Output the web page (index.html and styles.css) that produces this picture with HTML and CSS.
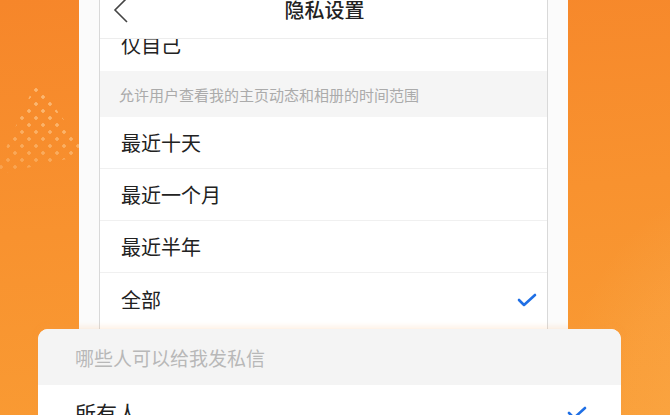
FILE: index.html
```html
<!DOCTYPE html>
<html lang="zh">
<head>
<meta charset="utf-8">
<title>隐私设置</title>
<link rel="stylesheet" href="styles.css">
</head>
<body>
<div class="stage">
  <div class="dots"></div>
  <div class="glow"></div>
  <div class="phone">
    <div class="screen">
      <header class="nav">
        <svg class="back" width="18" height="24" viewBox="0 0 18 24"><polyline points="15,-2 3,10 15,22" fill="none" stroke="#444" stroke-width="1.6"/></svg>
        <h1 class="title">隐私设置</h1>
      </header>
      <ul class="list first">
        <li class="row">仅自己</li>
      </ul>
      <div class="section">允许用户查看我的主页动态和相册的时间范围</div>
      <ul class="list">
        <li class="row">最近十天</li>
        <li class="row">最近一个月</li>
        <li class="row">最近半年</li>
        <li class="row">全部<svg class="check" width="20" height="16" viewBox="0 0 20 16"><polyline points="2,8 7,13 18,3" fill="none" stroke="#1f6fe5" stroke-width="2.6" stroke-linecap="round" stroke-linejoin="round"/></svg></li>
      </ul>
    </div>
  </div>
  <div class="sheet">
    <div class="sheet-head">哪些人可以给我发私信</div>
    <div class="sheet-row">所有人<svg class="check" width="20" height="16" viewBox="0 0 20 16"><polyline points="2,8 7,13 18,3" fill="none" stroke="#1f6fe5" stroke-width="2.6" stroke-linecap="round" stroke-linejoin="round"/></svg></div>
  </div>
</div>
</body>
</html>
```

FILE: styles.css
```css
* { box-sizing: border-box; margin: 0; padding: 0; }
html, body { width: 670px; height: 415px; overflow: hidden; }
body {
  font-family: "Noto Sans CJK SC", "Noto Sans", sans-serif;
  color: #222;
}
.stage {
  position: relative;
  width: 670px;
  height: 415px;
  overflow: hidden;
  background: linear-gradient(175deg, #f6862a 0%, #f8922f 50%, #f99c34 100%);
}
.glow {
  position: absolute;
  left: 560px;
  top: 180px;
  width: 260px;
  height: 400px;
  border-radius: 50%;
  background: radial-gradient(ellipse at 70% 60%, rgba(255,200,120,0.22) 0%, rgba(255,200,120,0.12) 45%, rgba(255,200,120,0) 70%);
}
.dots {
  position: absolute;
  left: 0;
  top: 82px;
  width: 82px;
  height: 92px;
  background-image:
    radial-gradient(circle, rgba(255,225,180,0.5) 1.5px, transparent 2px),
    radial-gradient(circle, rgba(255,225,180,0.5) 1.5px, transparent 2px);
  background-size: 14px 14px, 14px 14px;
  background-position: 1px 1px, 8px 8px;
  clip-path: polygon(44% 0, 100% 68%, 100% 80%, 0 100%, 0 86%);
  -webkit-mask-image: linear-gradient(200deg, #000 35%, rgba(0,0,0,0.45) 100%);
}
.phone {
  position: relative;
  margin-left: 79px;
  width: 489px;
  height: 415px;
  padding: 0 20px;
  background: #fbfbfb;
}
.screen {
  height: 100%;
  background: #fff;
  border-left: 1px solid #d9d9d9;
  border-right: 1px solid #d9d9d9;
  overflow: hidden;
}
.nav {
  position: relative;
  z-index: 1;
  height: 39px;
  background: #fff;
  border-bottom: 1px solid #ededed;
  display: flex;
  align-items: flex-start;
  justify-content: center;
}
.back {
  position: absolute;
  left: 12px;
  top: 0;
}
.title {
  font-size: 20px;
  font-weight: 500;
  line-height: 22px;
  color: #222;
  margin-top: -1px;
  margin-left: 2px;
}
.list { list-style: none; }
.list.first { margin-top: -21px; }
.row {
  height: 52px;
  display: flex;
  align-items: center;
  justify-content: space-between;
  padding: 0 10px 0 21px;
  font-size: 20px;
  color: #222;
  border-bottom: 1px solid #f0f0f0;
}
.list.first .row { border-bottom: none; height: 53px; }
.list .row:last-child { border-bottom: none; }
.section {
  height: 46px;
  background: #f5f5f5;
  padding-left: 19px;
  display: flex;
  align-items: center;
  font-size: 15px;
  color: #ababab;
}
.check { margin-top: 2px; }
.sheet {
  position: absolute;
  left: 38px;
  top: 329px;
  width: 583px;
  height: 110px;
  border-radius: 10px 10px 0 0;
  background: #fff;
  overflow: hidden;
  box-shadow: 0 -2px 6px rgba(250,160,80,0.18);
}
.sheet-head {
  height: 56px;
  background: #f4f4f4;
  display: flex;
  align-items: center;
  padding-left: 37px;
  font-size: 19px;
  color: #b8b8b8;
}
.sheet-row {
  height: 54px;
  display: flex;
  align-items: center;
  justify-content: space-between;
  padding: 0 34px 0 37px;
  font-size: 21px;
  color: #222;
}
```
